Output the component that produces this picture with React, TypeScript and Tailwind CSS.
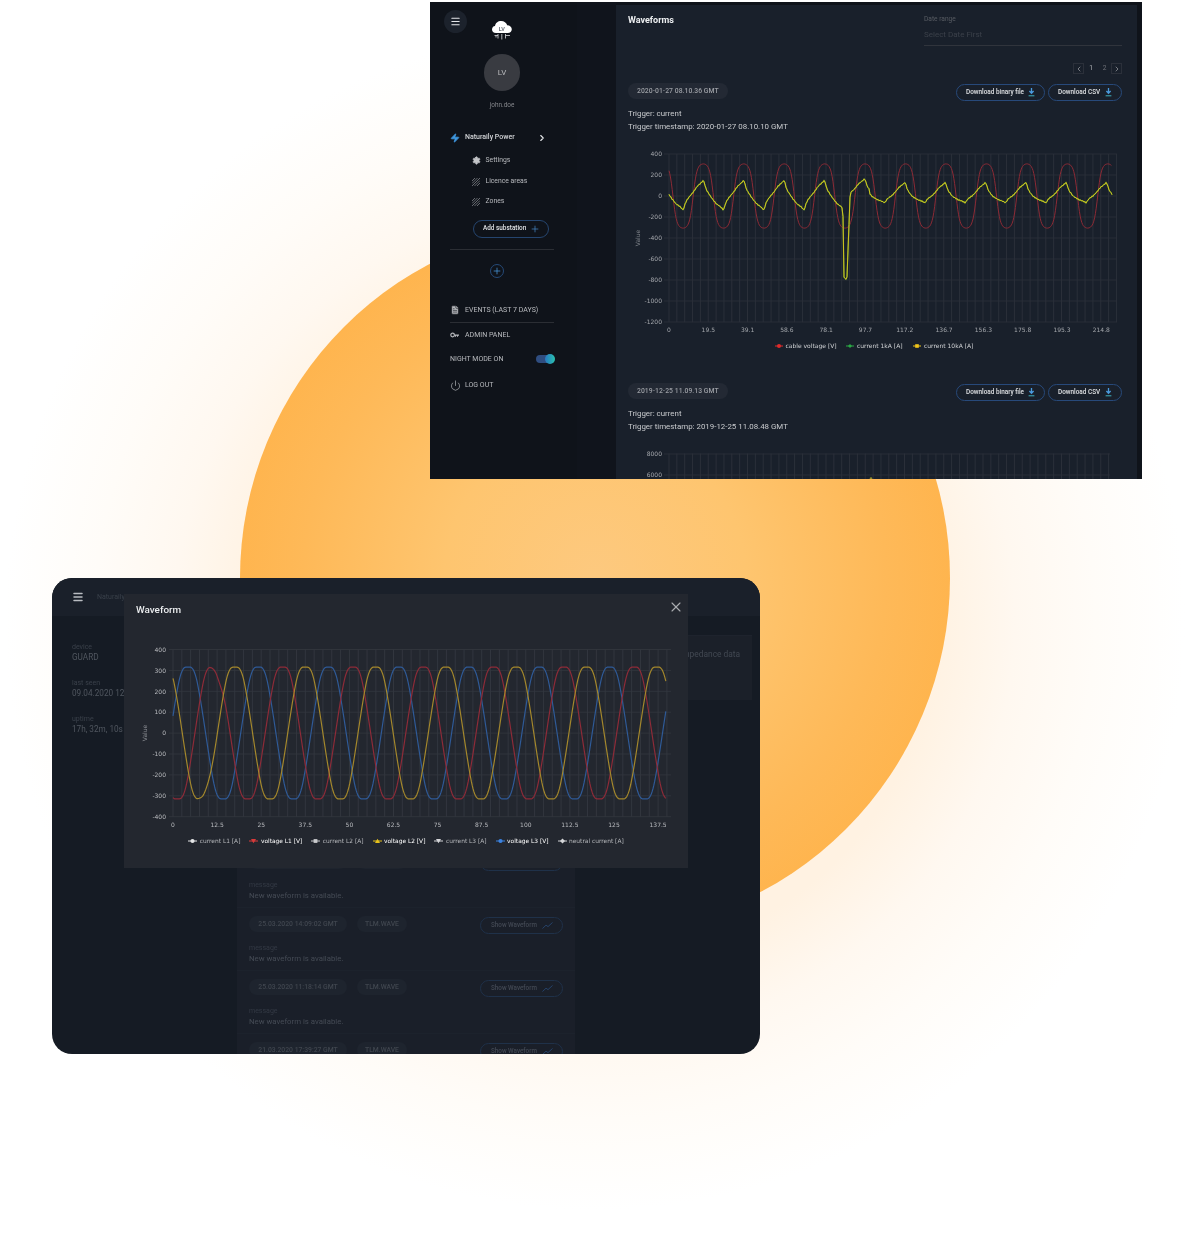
import React from "react";
import { ChevronLeft, ChevronRight, Menu, Plus, Power, X, FileText, Settings, Zap } from "lucide-react";

const roboto = "font-[family-name:Roboto]";
const dejavu = "font-[family-name:'DejaVu_Sans']";

function toPath(pts: [number, number][]) {
  return pts.map((p, i) => `${i ? "L" : "M"}${p[0].toFixed(1)} ${p[1].toFixed(1)}`).join(" ");
}

// ---------- first chart ----------
const zero1 = 195.5;
const perUnit1 = 21 / 200;

function redWave(): string {
  const pts: [number, number][] = [];
  for (let x = 669; x <= 1112; x += 0.8) {
    const t = ((x - 703.3) / 40.45) * Math.PI * 2;
    let v = Math.cos(t) * 400;
    v = 325 * Math.tanh(v / 250) * 1.02;
    v = Math.max(-325, Math.min(325, v));
    pts.push([x, zero1 - v * perUnit1]);
  }
  return toPath(pts);
}

const yellowCycle: [number, number][] = [
  [0, -1], [1.5, -0.62], [3, -0.35], [6, -0.05], [10, 0.25], [14, 0.62], [18, 0.85], [20.3, 1],
  [21.5, 0.72], [23, 0.4], [26, 0.1], [29, -0.2], [33, -0.55], [37, -0.75], [40.3, -1],
];

function cycleVal(dx: number) {
  const d = ((dx % 40.3) + 40.3) % 40.3;
  for (let i = 0; i < yellowCycle.length - 1; i++) {
    const [a, va] = yellowCycle[i];
    const [b, vb] = yellowCycle[i + 1];
    if (d >= a && d <= b) return va + ((vb - va) * (d - a)) / (b - a);
  }
  return 0;
}

function yellowWave(): string {
  const pts: [number, number][] = [];
  for (let x = 669; x <= 1112; x += 1) {
    const c = cycleVal(x - 683.3);
    let v: number;
    if (x < 842.5) {
      v = c > 0 ? c * 150 : c * 135;
    } else if (x < 844) {
      v = -100 - (x - 842.5) * 200;
    } else if (x < 847) {
      v = -800 + Math.abs(x - 845.6) * 20;
    } else if (x < 850.5) {
      v = -770 + ((x - 847) / 3.5) * 880;
    } else if (x < 853) {
      v = 40 + (x - 851) * 5;
    } else {
      const hump = x < 870 ? 35 : 0;
      v = c > 0 ? c * 130 + hump : c * 65 + hump * 0.3;
    }
    v += Math.sin(x * 2.7) * 5;
    pts.push([x, zero1 - v * perUnit1]);
  }
  return toPath(pts);
}

const xTicks1 = ["0", "19.5", "39.1", "58.6", "78.1", "97.7", "117.2", "136.7", "156.3", "175.8", "195.3", "214.8"];

function VerticalGrid({ from, to, step, y1, y2, color }: { from: number; to: number; step: number; y1: number; y2: number; color: string }) {
  const lines: number[] = [];
  for (let x = from; x <= to; x += step) lines.push(x);
  return (
    <>
      {lines.map((x) => (
        <line key={x} x1={x} x2={x} y1={y1} y2={y2} stroke={color} strokeWidth={0.8} />
      ))}
    </>
  );
}

function ChartOne() {
  const labels = [400, 200, 0, -200, -400, -600, -800, -1000, -1200];
  const yellow = yellowWave();
  return (
    <svg width={521} height={250} viewBox="616 132.5 521 250" className={`block -ml-3 ${dejavu}`}>
      <VerticalGrid from={669} to={1117} step={7.85} y1={153.5} y2={321.7} color="#2e333d" />
      {labels.map((l, i) => {
        const y = 153.5 + i * 21;
        return (
          <g key={l}>
            <line x1={664} x2={1117} y1={y} y2={y} stroke="#2b303a" strokeWidth={0.8} />
            <text x={662} y={y + 2.2} textAnchor="end" fontSize={6} fill="#a4a7ac">{l}</text>
          </g>
        );
      })}
      {xTicks1.map((t, i) => (
        <text key={t} x={669 + i * 39.3} y={331} textAnchor="middle" fontSize={6} fill="#a4a7ac">{t}</text>
      ))}
      <text transform="translate(640 237.5) rotate(-90)" textAnchor="middle" fontSize={6} fill="#7f838a">Value</text>
      <path d={redWave()} fill="none" stroke="#8c2a35" strokeWidth={1} />
      <path d={yellow} fill="none" stroke="#5c8a2a" strokeWidth={1.2} />
      <path d={yellow} fill="none" stroke="#cfc31f" strokeWidth={1} />
      <g fontSize={6} fill="#d0d2d5">
        <line x1={775} x2={783} y1={345.5} y2={345.5} stroke="#e02a2a" />
        <circle cx={779} cy={345.5} r={2} fill="#e02a2a" />
        <text x={785.5} y={347.5}>cable voltage [V]</text>
        <line x1={846} x2={854} y1={345.5} y2={345.5} stroke="#2aa845" />
        <path d="M850 343.5l2 2-2 2-2-2z" fill="#2aa845" />
        <text x={857} y={347.5}>current 1kA [A]</text>
        <line x1={913} x2={921} y1={345.5} y2={345.5} stroke="#f0c419" />
        <rect x={915.2} y={343.7} width={3.6} height={3.6} fill="#f0c419" />
        <text x={924} y={347.5}>current 10kA [A]</text>
      </g>
    </svg>
  );
}

function ChartOneB() {
  return (
    <svg width={521} height={50} viewBox="616 432.5 521 50" className={`block -ml-3 ${dejavu}`}>
      <VerticalGrid from={669} to={1110} step={7.85} y1={453} y2={483} color="#2e333d" />
      {[8000, 6000].map((l, i) => {
        const y = 453.5 + i * 21;
        return (
          <g key={l}>
            <line x1={664} x2={1110} y1={y} y2={y} stroke="#2b303a" strokeWidth={0.8} />
            <text x={662} y={y + 2.2} textAnchor="end" fontSize={6} fill="#a4a7ac">{l}</text>
          </g>
        );
      })}
      <circle cx={871} cy={478} r={1.3} fill="#8d8a2a" />
    </svg>
  );
}

// ---------- second chart ----------
function threePhase(peak: number, knee?: [number, number, number]): string {
  const zero = 733;
  const unit = 20.9 / 100;
  const pts: [number, number][] = [];
  for (let x = 173; x <= 666; x += 0.8) {
    const t = ((x - peak) / 70.3) * Math.PI * 2;
    let sum = 0;
    for (let k = -3; k <= 3; k++) {
      const tt = t + (k * 1.1 * Math.PI * 2) / 70.3;
      sum += Math.max(-315, Math.min(315, Math.cos(tt) * 365));
    }
    let v = sum / 7;
    if (knee) v += knee[1] * Math.exp(-Math.pow((x - knee[0]) / knee[2], 2));
    pts.push([x, zero - v * unit]);
  }
  return toPath(pts);
}

const xTicks2 = ["0", "12.5", "25", "37.5", "50", "62.5", "75", "87.5", "100", "112.5", "125", "137.5"];

type MarkerKind = "circle" | "square" | "diamond" | "triangle" | "tri-down";

function LegendMarker({ color, kind }: { color: string; kind: MarkerKind }) {
  return (
    <svg width={9} height={6} viewBox="0 0 9 6" className="shrink-0">
      <line x1={0} x2={9} y1={3} y2={3} stroke={color} strokeWidth={1} />
      {kind === "circle" && <circle cx={4.5} cy={3} r={2.1} fill={color} />}
      {kind === "square" && <rect x={2.6} y={1.1} width={3.8} height={3.8} fill={color} />}
      {kind === "diamond" && <path d="M4.5 .6 7 3 4.5 5.4 2 3z" fill={color} />}
      {kind === "triangle" && <path d="M4.5 .8 7 5H2z" fill={color} />}
      {kind === "tri-down" && <path d="M4.5 5.2 7 1H2z" fill={color} />}
    </svg>
  );
}

function LegendItem({ color, kind, label, strong }: { color: string; kind: MarkerKind; label: string; strong?: boolean }) {
  return (
    <div className="flex items-center gap-[2.5px]">
      <LegendMarker color={color} kind={kind} />
      <span className={strong ? "text-white" : "text-[#b6b8bc]"}>{label}</span>
    </div>
  );
}

function ChartTwo() {
  const labels = [400, 300, 200, 100, 0, -100, -200, -300, -400];
  return (
    <svg width={564} height={195} viewBox="124 636 564 195" className={`block ${dejavu}`}>
      <VerticalGrid from={173} to={671} step={8.82} y1={649.5} y2={816.7} color="#363a42" />
      {labels.map((l, i) => {
        const y = 649.5 + i * 20.9;
        return (
          <g key={l}>
            <line x1={169} x2={671} y1={y} y2={y} stroke="#33373f" strokeWidth={0.8} />
            <text x={166} y={y + 2.2} textAnchor="end" fontSize={6} fill="#b9bbbf">{l}</text>
          </g>
        );
      })}
      {xTicks2.map((t, i) => (
        <text key={t} x={173 + i * 44.1} y={826.5} textAnchor="middle" fontSize={6} fill="#b9bbbf">{t}</text>
      ))}
      <text transform="translate(147 733) rotate(-90)" textAnchor="middle" fontSize={6} fill="#8a8d93">Value</text>
      <path d={threePhase(188)} fill="none" stroke="#2f5a97" strokeWidth={1.2} />
      <path d={threePhase(212.5, [219.5, -45, 5])} fill="none" stroke="#8d2b38" strokeWidth={1.2} />
      <path d={threePhase(235, [207, 28, 5])} fill="none" stroke="#a3872c" strokeWidth={1.2} />
    </svg>
  );
}

// ---------- small parts ----------
function DownloadIcon() {
  return (
    <svg width={7} height={9} viewBox="0 0 7 9" className="shrink-0">
      <path d="M3.5 0v4.6M1.4 3l2.1 2.2L5.6 3" fill="none" stroke="#4a9ade" strokeWidth={1.3} />
      <line x1={0.6} x2={6.4} y1={7.8} y2={7.8} stroke="#3fb0c0" strokeWidth={1} />
    </svg>
  );
}

function Hatch() {
  return (
    <svg width={8} height={8} viewBox="0 0 8 8" className="shrink-0" stroke="#8e9196" strokeWidth={0.7}>
      <path d="M0 3 3 0M0 5.5 5.5 0M0 8 8 0M2.5 8 8 2.5M5 8 8 5" />
    </svg>
  );
}

function KeyIcon() {
  return (
    <svg width={9} height={6} viewBox="0 0 9 6" className="shrink-0">
      <circle cx={2.6} cy={3} r={1.8} fill="none" stroke="#b5b7bb" strokeWidth={1.2} />
      <path d="M4.4 2.4H9v1.4H8v1H7v-1H6v1H5V3.8h-.6z" fill="#b5b7bb" />
    </svg>
  );
}

function CloudLogo() {
  return (
    <svg width={22} height={20} viewBox="0 0 22 20" className="shrink-0">
      <path d="M5 13C2.4 13 1 11.3 1 9.4 1 7.6 2.3 6.2 4 6 4.4 3 6.9 1 10.2 1c2.9 0 5.2 1.8 6 4.3 2.6.1 4.6 1.8 4.6 4 0 2.1-1.7 3.7-4 3.7z" fill="#fff" />
      <text x={10.8} y={10.6} textAnchor="middle" fontSize={5.5} fontWeight={700} fill="#6b7079" className={roboto}>LV</text>
      <path d="M3.5 15.5H7M7 14v4.5M10.8 14v5.5M14.5 14v4.5M14.5 15.5H19M5 15.5v2" stroke="#d7d9dc" strokeWidth={0.8} fill="none" />
    </svg>
  );
}

function SmallTrend() {
  return (
    <svg width={11} height={7} viewBox="0 0 11 7" className="shrink-0">
      <path d="M.5 6.5 4 3.2l2 1.4L10.5.5" fill="none" stroke="#27466f" strokeWidth={0.9} />
    </svg>
  );
}

function OutlineButton({ label, w }: { label: string; w: string }) {
  return (
    <div className={`${w} h-[17px] rounded-full border border-[#27497a] flex items-center justify-between pl-[9px] pr-[9px]`}>
      <span className="text-[6.4px] font-medium text-[#dfe1e4] whitespace-nowrap">{label}</span>
      <DownloadIcon />
    </div>
  );
}

function WaveBlock({ stamp, trigger, children, h }: { stamp: string; trigger: string; children: React.ReactNode; h: string }) {
  return (
    <div className={h}>
      <div className="flex justify-between items-start">
        <div className="h-4 rounded-full bg-[#232934] flex items-center px-[9px] text-[6.8px] font-medium tracking-[0.05px] text-[#9c9fa5]">{stamp}</div>
        <div className="flex gap-[3px] mt-px">
          <OutlineButton label="Download binary file" w="w-[89px]" />
          <OutlineButton label="Download CSV" w="w-[74px]" />
        </div>
      </div>
      <div className="mt-[5.5px] text-[7.9px] leading-[13px] text-[#c9cbce]">
        <div>Trigger: current</div>
        <div>Trigger timestamp: {trigger}</div>
      </div>
      {children}
    </div>
  );
}

function NavRow({ icon, label, cls = "" }: { icon: React.ReactNode; label: string; cls?: string }) {
  return (
    <div className={`h-5 flex items-center ${cls}`}>
      <div className="w-[15px] shrink-0 flex items-center">{icon}</div>
      <span className="text-[7px] text-[#b9bbbf] whitespace-nowrap">{label}</span>
    </div>
  );
}

function SubRow({ icon, label }: { icon: React.ReactNode; label: string }) {
  return (
    <div className="h-5 flex items-center pl-[22px]">
      <div className="w-[13.5px] shrink-0 flex items-center">{icon}</div>
      <span className="text-[6.8px] text-[#b9bbbf] whitespace-nowrap">{label}</span>
    </div>
  );
}

function TopWindow() {
  return (
    <div className={`absolute left-[430px] top-[2px] w-[712px] h-[477px] bg-[#0f131a] overflow-hidden flex blur-[0.35px] ${roboto}`}>
      {/* sidebar */}
      <div className="w-[147px] shrink-0 bg-[#0f131a]">
        <div className="flex pt-2 pl-[14px]">
          <div className="w-[23px] h-[23px] rounded-full bg-[#1c222c] flex items-center justify-center">
            <Menu size={11} color="#e5e7ea" strokeWidth={2.4} />
          </div>
          <div className="ml-[24px] mt-[10px]"><CloudLogo /></div>
        </div>
        <div className="ml-[54px] mt-[14px] w-9 h-[37px] rounded-full bg-[#393b41] flex items-center justify-center text-[8px] text-[#b9babd]">LV</div>
        <div className="ml-[54px] w-9 h-[10px] mt-[10px] flex items-center justify-center text-[6.4px] text-[#85878c] whitespace-nowrap">john.doe</div>
        <div className="px-5 mt-[16.5px]">
          <div className="h-5 flex items-center">
            <div className="w-[15px] shrink-0 flex items-center">
              <Zap size={10} color="#3f97e0" fill="#3f97e0" />
            </div>
            <span className="text-[7px] font-medium text-[#d4d6d9] whitespace-nowrap w-[71.5px]">Naturaily Power</span>
            <ChevronRight size={10} color="#e5e7ea" strokeWidth={2.6} />
          </div>
          <div className="mt-[3px]">
            <SubRow icon={<Settings size={9} color="#c4c6c9" fill="#c4c6c9" />} label="Settings" />
          </div>
          <div className="mt-px">
            <SubRow icon={<Hatch />} label="Licence areas" />
          </div>
          <SubRow icon={<Hatch />} label="Zones" />
          <div className="mt-[8.5px] ml-[23px] w-[76px] h-[18px] rounded-full border border-[#25456f] flex items-center justify-between pl-[9px] pr-[8px]">
            <span className="text-[6.4px] font-medium text-[#dfe1e4] whitespace-nowrap">Add substation</span>
            <Plus size={10} color="#4a8fd0" strokeWidth={1.6} />
          </div>
          <div className="mt-[11px] h-px w-[104px] bg-[#2b2e34]" />
          <div className="mt-[14px] ml-[40px] w-[14px] h-[14px] rounded-full border border-[#254a78] flex items-center justify-center">
            <Plus size={10} color="#4a9ade" strokeWidth={1.8} />
          </div>
          <div className="mt-[22px]">
            <NavRow icon={<FileText size={10} color="#0f131a" fill="#b5b7bb" strokeWidth={1.4} />} label="EVENTS (LAST 7 DAYS)" />
          </div>
          <div className="mt-[2px] h-px w-[104px] bg-[#2b2e34]" />
          <div className="mt-[2px]">
            <NavRow icon={<KeyIcon />} label="ADMIN PANEL" />
          </div>
          <div className="mt-[4px] h-5 flex items-center justify-between w-[105px]">
            <span className="text-[7px] text-[#b9bbbf] whitespace-nowrap">NIGHT MODE ON</span>
            <div className="relative w-[18px] h-[8px] rounded-full bg-[#2f4d80] mr-px">
              <div className="absolute right-[-1px] top-[-1px] w-[10px] h-[10px] rounded-full bg-gradient-to-r from-[#2a78c0] to-[#2cc0ac]" />
            </div>
          </div>
          <div className="mt-[6px]">
            <NavRow icon={<Power size={11} color="#b5b7bb" strokeWidth={1.5} />} label="LOG OUT" />
          </div>
        </div>
      </div>
      <div className="w-[39px] shrink-0 bg-[#10141c]" />
      {/* main */}
      <div className="w-[521px] shrink-0 mt-[3px] bg-[#19202b] pl-3 pr-[15px]">
        <div className="flex justify-between h-[40px]">
          <div className="text-[9px] font-bold text-[#eceef0] leading-[30px]">Waveforms</div>
          <div className="w-[198px] h-[41px] border-b border-[#30343c] pt-[9px]">
            <div className="text-[6.6px] leading-[10px] text-[#585c63]">Date range</div>
            <div className="text-[8px] leading-[10px] mt-[6px] text-[#3b404a]">Select Date First</div>
          </div>
        </div>
        <div className="mt-[18px] h-[11px] flex justify-end items-center text-[6.6px] text-[#aeb0b4]">
          <div className="w-[11px] h-[11px] border border-[#2b303a] flex items-center justify-center"><ChevronLeft size={8} color="#a9abaf" /></div>
          <span className="w-[14px] text-center">1</span>
          <span className="w-[13px] text-center text-[#6f7278]">2</span>
          <div className="w-[11px] h-[11px] border border-[#2b303a] flex items-center justify-center"><ChevronRight size={8} color="#a9abaf" /></div>
        </div>
        <div className="mt-[9px]">
          <WaveBlock stamp="2020-01-27 08.10.36 GMT" trigger="2020-01-27 08.10.10 GMT" h="h-[300px]">
            <ChartOne />
          </WaveBlock>
          <WaveBlock stamp="2019-12-25 11.09.13 GMT" trigger="2019-12-25 11.08.48 GMT" h="h-[96px]">
            <ChartOneB />
          </WaveBlock>
        </div>
      </div>
      <div className="flex-1 bg-[#0f131a]" />
    </div>
  );
}

function DimChip({ label, w }: { label: string; w: string }) {
  return (
    <div className={`${w} h-4 rounded-full bg-[#1e242e] flex items-center justify-center text-[6.8px] font-medium text-[#40464f] whitespace-nowrap`}>{label}</div>
  );
}

function EventRow({ stamp, last }: { stamp: string; last?: boolean }) {
  return (
    <div className="h-[63px] border-b border-[#1c222c] px-3">
      <div className="flex items-start pt-2">
        <DimChip label={stamp} w="w-[98px]" />
        <div className="ml-[10px]"><DimChip label="TLM.WAVE" w="w-[50px]" /></div>
        <div className="ml-auto mt-px w-[83px] h-[17px] rounded-full border border-[#1f3149] flex items-center justify-between pl-[10px] pr-[9px]">
          <span className="text-[6.3px] font-medium text-[#434954] whitespace-nowrap">Show Waveform</span>
          <SmallTrend />
        </div>
      </div>
      {!last && (
        <>
          <div className="mt-[9px] text-[7px] leading-[10px] text-[#333944]">message</div>
          <div className="text-[7.8px] leading-[11px] text-[#454b55]">New waveform is available.</div>
        </>
      )}
    </div>
  );
}

function InfoBlock({ label, value }: { label: string; value: string }) {
  return (
    <div className="h-[36px]">
      <div className="text-[7px] leading-[10px] text-[#3a404a]">{label}</div>
      <div className="text-[8.2px] leading-[10px] text-[#50565f] whitespace-nowrap">{value}</div>
    </div>
  );
}

function BottomWindow() {
  return (
    <div className={`absolute left-[52px] top-[578px] w-[708px] h-[476px] rounded-[20px] bg-[#151b24] overflow-hidden blur-[0.3px] ${roboto}`}>
      <div className="h-[38px] bg-[#1a202a] flex items-center pl-[20px]">
        <Menu size={12} color="#b9bcc1" strokeWidth={3} />
        <span className="ml-[13px] text-[7px] text-[#3a404a]">Naturaily</span>
      </div>
      <div className="flex">
        <div className="w-[185px] shrink-0 pl-5 pt-[26px]">
          <InfoBlock label="device" value="GUARD" />
          <InfoBlock label="last seen" value="09.04.2020 12:" />
          <InfoBlock label="uptime" value="17h, 32m, 10s" />
        </div>
        <div className="w-[338px] shrink-0 bg-[#1a1f29] pt-[229px] h-[438px] overflow-hidden">
          <EventRow stamp="25.03.2020 16:12:40 GMT" />
          <EventRow stamp="25.03.2020 14:09:02 GMT" />
          <EventRow stamp="25.03.2020 11:18:14 GMT" />
          <EventRow stamp="21.03.2020 17:39:27 GMT" last />
        </div>
        <div className="flex-1 pl-[25px] pr-2 pt-[19px]">
          <div className="h-[65px] bg-[#1b2029] pl-[80px] pt-[12px] border-t border-[#1e232d] text-[8.4px] text-[#424852] overflow-hidden whitespace-nowrap">Impedance data</div>
        </div>
      </div>
      {/* modal */}
      <div className="absolute left-[72px] top-[16px] w-[564px] h-[274px] bg-[#23272f]">
        <div className="flex justify-between items-start pl-3 pr-1 h-[42px]">
          <div className="text-[9.9px] font-medium text-[#eceef0] leading-[32px]">Waveform</div>
          <X size={16} color="#a9abaf" className="mt-[5px]" strokeWidth={1.7} />
        </div>
        <ChartTwo />
        <div className={`flex justify-center items-center gap-[9px] text-[5.9px] mt-[6px] ${dejavu}`}>
          <LegendItem color="#e4e5e7" kind="circle" label="current L1 [A]" />
          <LegendItem color="#d83a3a" kind="tri-down" label="voltage L1 [V]" strong />
          <LegendItem color="#c9cacd" kind="square" label="current L2 [A]" />
          <LegendItem color="#e6c21c" kind="triangle" label="voltage L2 [V]" strong />
          <LegendItem color="#d4d5d8" kind="tri-down" label="current L3 [A]" />
          <LegendItem color="#3b82e0" kind="circle" label="voltage L3 [V]" strong />
          <LegendItem color="#d4d5d8" kind="diamond" label="neutral current [A]" />
        </div>
      </div>
    </div>
  );
}

export default function App() {
  return (
    <div className="relative w-[1190px] h-[1234px] overflow-hidden bg-white">
      <div className="absolute inset-0 bg-[radial-gradient(circle_at_595px_620px,#fff2e2_0px,#fff2e2_340px,#fff8f0_420px,#fffcf8_500px,#ffffff_590px)]" />
      <div className="absolute left-[240px] top-[223px] w-[710px] h-[710px] rounded-full bg-[radial-gradient(circle,#fdc97f_0%,#fec56f_30%,#feb958_58%,#ffb044_85%,#ffae40_100%)]" />
      <TopWindow />
      <BottomWindow />
    </div>
  );
}
